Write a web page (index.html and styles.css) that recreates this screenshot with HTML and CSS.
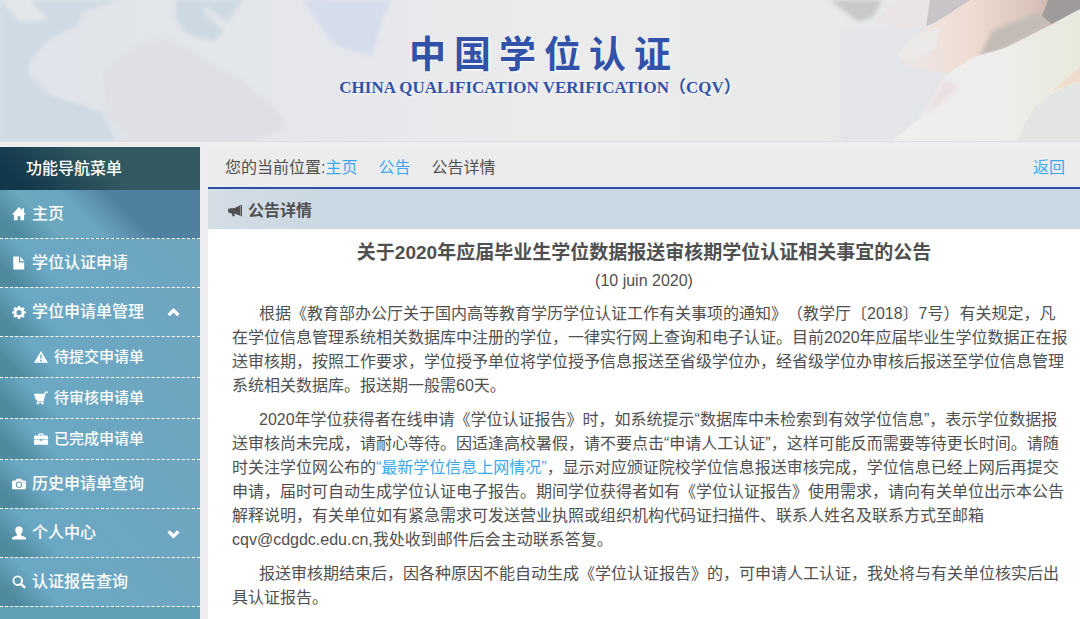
FILE: index.html
```html
<!DOCTYPE html>
<html lang="zh-CN">
<head>
    <meta charset="UTF-8">
    <meta name="viewport" content="width=device-width, initial-scale=1.0">
    <title>中国学位认证</title>
    <link rel="stylesheet" href="styles.css">
</head>
<body>
    <header class="banner">
        <svg class="banner-art" viewBox="0 0 1080 141" preserveAspectRatio="none" aria-hidden="true">
            <defs>
                <linearGradient id="base" x1="0" x2="1" y1="0" y2="0">
                    <stop offset="0" stop-color="#dfe4ea"/>
                    <stop offset="0.3" stop-color="#e5e7eb"/>
                    <stop offset="0.5" stop-color="#ebebec"/>
                    <stop offset="0.75" stop-color="#e9eaea"/>
                    <stop offset="1" stop-color="#e2e4e9"/>
                </linearGradient>
                <linearGradient id="skin" x1="0" x2="1" y1="0" y2="0">
                    <stop offset="0" stop-color="#ece8e8"/>
                    <stop offset="0.4" stop-color="#efdcd3"/>
                    <stop offset="0.75" stop-color="#d9c3bb"/>
                    <stop offset="1" stop-color="#b8a19a"/>
                </linearGradient>
                <linearGradient id="paper" x1="0" x2="1" y1="0" y2="0">
                    <stop offset="0" stop-color="#f0efef"/>
                    <stop offset="0.6" stop-color="#ededeb"/>
                    <stop offset="1" stop-color="#e9eadc"/>
                </linearGradient>
                <filter id="soft"><feGaussianBlur stdDeviation="2"/></filter>
            </defs>
            <rect width="1080" height="141" fill="url(#base)"/>
            <!-- clouds -->
            <g filter="url(#soft)">
                <path d="M0 0h118L82 12 78 24 48 41 30 60 28 74 50 95 102 112 116 141H0z" fill="#cfdae4"/>
                <path d="M0 0h30l18 20L20 22z" fill="#e3e7e9"/>
                <path d="M176 0h68l-12 14-10 20-10 7-24-6-12-15z" fill="#cdd9e2"/>
                <path d="M204 5l24 18-4 8-18-16z" fill="#e3e6ea"/>
                <path d="M303 0h88l-8 18-11 38-23-6-18-8z" fill="#d5dcec"/>
                <path d="M140 42l30-4 30 18 42 24 42 38-2 12-28 11H128l-22-26-4-44z" fill="#dee0e6"/>
                <path d="M840 28h92l10 70-52 43h-50z" fill="#e4e5e9"/>
            </g>
            <!-- hand and paper -->
            <path d="M830 0h52l-8 16-16 6z" fill="#c9c9ca" filter="url(#soft)"/>
            <path d="M876 20L898 0h74l-28 24-44 6z" fill="#ebe4e7"/>
            <path d="M930 0h42l-16 9-10 10-20 7z" fill="#c9c4c7"/>
            <path d="M896 56l20-22 36-22 18-12h92l18 6-66 43-60 26-44-8z" fill="url(#skin)"/>
            <path d="M896 56l20-22 24-7-4 22-26 13z" fill="#eae9e7"/>
            <path d="M980 56l12-25 44-18 16 8-28 18-24 12z" fill="#c2bcb5" filter="url(#soft)"/>
            <path d="M1048 0h32v9l-28 15-10-8z" fill="#9f9b9b"/>
            <path d="M892 141l30-24 12-22 12-20 28-18 31-9 75-38v131z" fill="url(#paper)"/>
            <path d="M925 116l18-36 18 6z" fill="#eadfe1" filter="url(#soft)"/>
            <path d="M1052 91l28-24v14z" fill="#efdccc"/>
            <path d="M1016 141l18-34 30-20 16-3v57z" fill="#e3e4e4"/>
        </svg>
        <div class="brand">
            <h1 class="brand-cn"><span>中</span><span>国</span><span>学</span><span>位</span><span>认</span><span>证</span></h1>
            <p class="brand-en">CHINA QUALIFICATION VERIFICATION（CQV）</p>
        </div>
    </header>

    <div class="layout">
        <nav class="sidebar">
            <h2 class="sidebar-title">功能导航菜单</h2>
            <ul class="menu">
                <li><a class="menu-item active" href="#">
                    <svg class="icon" viewBox="0 0 16 16"><path d="M8 0L0 8.500h2.200V15h4.300v-4.500h3V15h4.300V8.500H16l-2.200-2.300V1.500h-2.300v2.300z"/></svg>
                    <span>主页</span>
                </a></li>
                <li><a class="menu-item" href="#">
                    <svg class="icon" viewBox="0 0 16 16"><path d="M1.500 0.500H8v7h6V15.500H1.500zM9.500 0.500L14 6H9.500z"/></svg>
                    <span>学位认证申请</span>
                </a></li>
                <li><a class="menu-item" href="#">
                    <svg class="icon" viewBox="0 0 16 16"><path fill-rule="evenodd" d="M6.700 1h2.600l.4 1.900 1.300.5L12.700 2.400l1.800 1.800-1.100 1.700.5 1.200 2 .4v2l-2 .4-.5 1.300 1.100 1.600-1.800 1.800-1.700-1.100-1.300.6-.4 1.900H6.700l-.4-1.900-1.300-.6-1.700 1.100-1.800-1.800 1.100-1.600-.5-1.300-2-.4v-2l2-.4.5-1.200-1.100-1.700 1.800-1.800L5 3.400l1.300-.5zM8 5.600a2.900 2.900 0 1 0 0 5.800 2.900 2.900 0 0 0 0-5.800z"/></svg>
                    <span>学位申请单管理</span>
                    <svg class="arrow" viewBox="0 0 12 12"><path d="M1.500 8.500L6 4l4.500 4.500"/></svg>
                </a>
                    <ul class="submenu">
                        <li><a class="menu-item" href="#">
                            <svg class="icon" viewBox="0 0 16 16"><path fill-rule="evenodd" d="M8 1l8 13.500H0zM7 5.500l.5 5h1l.5-5zM7.100 11.500v1.600h1.800v-1.600z"/></svg>
                            <span>待提交申请单</span>
                        </a></li>
                        <li><a class="menu-item" href="#">
                            <svg class="icon" viewBox="0 0 16 16"><path d="M0 3h11.700l.8-2.500H16V2h-2.500L11 11.500H3.500V10H2zM3 12h8v1H3z"/><circle cx="4.500" cy="14" r="1.400"/><circle cx="9.500" cy="14" r="1.400"/></svg>
                            <span>待审核申请单</span>
                        </a></li>
                        <li><a class="menu-item" href="#">
                            <svg class="icon" viewBox="0 0 16 16"><path fill-rule="evenodd" d="M5 4V2.500L6 1.500h4l1 1V4h4l1 1v3.500H9.500V8h-3v.5H0V5l1-1zM6.300 4h3.400V2.800H6.300zM0 9.200h6.500v.8h3v-.8H16V14.500H0z"/></svg>
                            <span>已完成申请单</span>
                        </a></li>
                    </ul>
                </li>
                <li><a class="menu-item" href="#">
                    <svg class="icon" viewBox="0 0 16 16"><path fill-rule="evenodd" d="M1 4h3.200l1.300-2h5l1.300 2H15l1 1v8l-1 1H1l-1-1V5zM8 5.200a3.600 3.600 0 1 0 0 7.200 3.600 3.600 0 0 0 0-7.200zM8 6.300a2.500 2.500 0 1 1 0 5 2.500 2.500 0 0 1 0-5zM13 5.500v1.200h1.500V5.500z"/></svg>
                    <span>历史申请单查询</span>
                </a></li>
                <li><a class="menu-item" href="#">
                    <svg class="icon" viewBox="0 0 16 16"><path d="M8 .5c2.900 0 4.300 1.800 4.200 4.500-.1 2-1 3.500-2 4.400v1.100l4.500 2 1.300 1v2H0v-2l1.300-1 4.500-2V9.400c-1-.9-1.900-2.400-2-4.400C3.700 2.300 5.100.5 8 .5z"/></svg>
                    <span>个人中心</span>
                    <svg class="arrow" viewBox="0 0 12 12"><path d="M1.500 4L6 8.500 10.500 4"/></svg>
                </a></li>
                <li><a class="menu-item" href="#">
                    <svg class="icon" viewBox="0 0 16 16"><path fill-rule="evenodd" d="M6.500.500a6 6 0 0 1 5.100 9.200L16 13.500l-2 2.200-4.200-4.100A6 6 0 1 1 6.500.500zM6.500 2.700a3.800 3.800 0 1 0 0 7.600 3.800 3.800 0 0 0 0-7.600z"/></svg>
                    <span>认证报告查询</span>
                </a></li>
            </ul>
        </nav>

        <main class="content">
            <div class="breadcrumb">
                <span class="trail">您的当前位置:<a href="#">主页</a></span>
                <a href="#">公告</a>
                <span>公告详情</span>
                <a class="back" href="#">返回</a>
            </div>
            <h2 class="panel-title">
                <svg class="icon" viewBox="0 0 16 16"><path d="M14.500 1H16v13h-1.500zM14 1.500v12L8 11H7l1 3H5.300L4 10.500H2V9.800H0V5.500h2V4.800h5z"/></svg>
                <span>公告详情</span>
            </h2>
            <article class="notice">
                <h3>关于2020年应届毕业生学位数据报送审核期学位认证相关事宜的公告</h3>
                <p class="date">(10 juin 2020)</p>
                <p>根据《教育部办公厅关于国内高等教育学历学位认证工作有关事项的通知》（教学厅〔2018〕7号）有关规定，凡在学位信息管理系统相关数据库中注册的学位，一律实行网上查询和电子认证。目前2020年应届毕业生学位数据正在报送审核期，按照工作要求，学位授予单位将学位授予信息报送至省级学位办，经省级学位办审核后报送至学位信息管理系统相关数据库。报送期一般需60天。</p>
                <p>2020年学位获得者在线申请《学位认证报告》时，如系统提示“数据库中未检索到有效学位信息”，表示学位数据报送审核尚未完成，请耐心等待。因适逢高校暑假，请不要点击“申请人工认证”，这样可能反而需要等待更长时间。请随时关注学位网公布的<a href="#">“最新学位信息上网情况”</a>，显示对应颁证院校学位信息报送审核完成，学位信息已经上网后再提交申请，届时可自动生成学位认证电子报告。期间学位获得者如有《学位认证报告》使用需求，请向有关单位出示本公告解释说明，有关单位如有紧急需求可发送营业执照或组织机构代码证扫描件、联系人姓名及联系方式至邮箱cqv@cdgdc.edu.cn,我处收到邮件后会主动联系答复。</p>
                <p>报送审核期结束后，因各种原因不能自动生成《学位认证报告》的，可申请人工认证，我处将与有关单位核实后出具认证报告。</p>
            </article>
        </main>
    </div>
</body>
</html>
```

FILE: styles.css
```css
* {
    margin: 0;
    padding: 0;
    box-sizing: border-box;
}

body {
    display: flex;
    flex-direction: column;
    min-height: 100vh;
    background: #eeedef;
    color: #505050;
    font-family: "Liberation Sans", "Noto Sans CJK SC", sans-serif;
    font-size: 16px;
    line-height: 24px;
    text-spacing-trim: space-all;
}

a {
    color: #3ba9ec;
    text-decoration: none;
}

ul {
    list-style: none;
}

/* banner */
.banner {
    position: relative;
    padding: 35px 0 41px;
    border-bottom: 1px solid #dcdfe8;
}

.banner-art {
    position: absolute;
    inset: 0;
    width: 100%;
    height: 100%;
}

.brand {
    position: relative;
    display: flex;
    flex-direction: column;
    align-items: center;
    color: #3152a8;
}

.brand-cn {
    display: flex;
    gap: 8px;
    font-size: 37px;
    line-height: 41px;
    text-shadow: 1px 1px 2px #fff;
}

.brand-en {
    font-family: "Liberation Serif", "Noto Sans CJK SC", serif;
    font-size: 17px;
    font-weight: bold;
    text-shadow: 1px 1px 2px #fff;
}

/* layout */
.layout {
    display: flex;
    flex: 1;
    gap: 8px;
    padding-top: 5px;
}

.icon {
    width: 14px;
    height: 14px;
    flex: none;
    fill: currentColor;
}

/* sidebar */
.sidebar {
    width: 200px;
    flex: none;
    background: #62a0b6;
}

.sidebar-title {
    padding: 10px 26px 9px;
    background: linear-gradient(45deg, #12384c 20px, #31595f 90px);
    color: #fff;
    font-size: 16px;
    font-weight: 500;
}

.menu-item {
    display: flex;
    align-items: center;
    gap: 6px;
    height: 49px;
    padding: 0 20px 0 12px;
    border-bottom: 1px dashed #fff;
    background: linear-gradient(45deg, #508a9f 16px, #6ba8c4 44px, #6fa5bf);
    color: #fff;
    font-weight: 500;
}

.menu-item.active {
    background: linear-gradient(45deg, #508a9f 16px, #6ba8c0 45px, #6ba5c0 75px, #5080a0 110px);
}

.submenu .menu-item {
    height: 41px;
    padding-left: 34px;
    font-size: 15px;
}

.arrow {
    width: 13px;
    height: 13px;
    margin-left: auto;
    fill: none;
    stroke: #fff;
    stroke-width: 3;
}

/* content */
.content {
    flex: 1;
    min-width: 0;
    display: flex;
    flex-direction: column;
}

.breadcrumb {
    display: flex;
    gap: 21px;
    padding: 9px 15px 7px 17px;
    border-bottom: 2px solid #2e50a8;
    background: #ececec;
}

.back {
    margin-left: auto;
}

.panel-title {
    display: flex;
    align-items: center;
    gap: 6px;
    padding: 10px 20px 6px;
    background: linear-gradient(90deg, #d5dde5, #c9d8e2 120px);
    font-size: 16px;
}

.notice {
    flex: 1;
    padding: 12px 9px 10px 24px;
    background: #fff;
}

.notice h3 {
    padding-right: 15px;
    font-size: 19px;
    text-align: center;
}

.notice p {
    margin-bottom: 10px;
    text-indent: 27px;
}

.notice .date {
    margin: 4px 0 9px;
    padding-right: 15px;
    text-align: center;
    text-indent: 0;
}
```
